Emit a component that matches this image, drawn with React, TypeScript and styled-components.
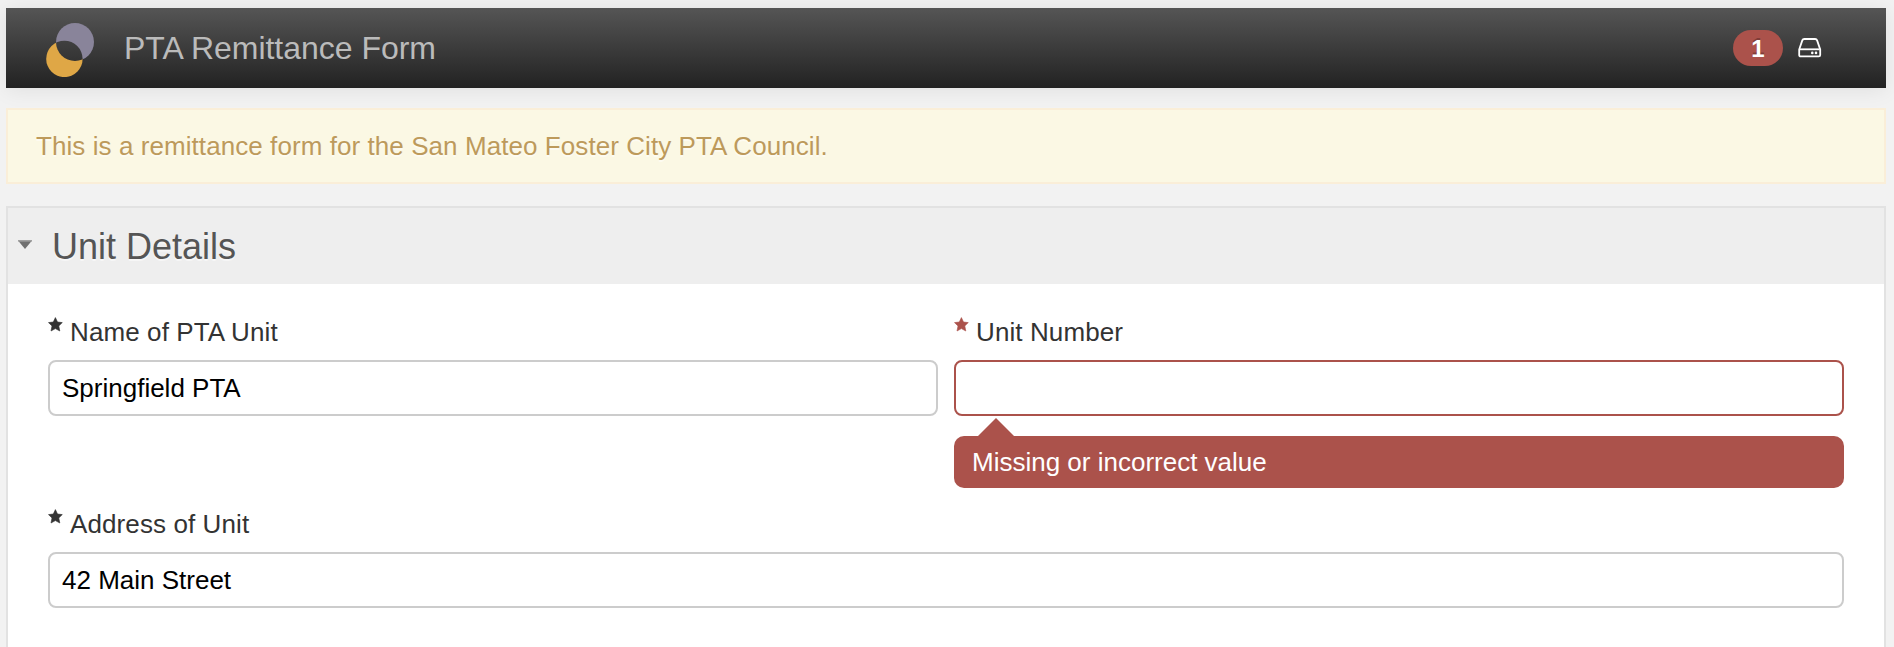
import React from "react";
import styled, { createGlobalStyle } from "styled-components";

const RED = "#ab524b";

const GlobalStyle = createGlobalStyle`
  *, *::before, *::after { box-sizing: border-box; }
  html, body { height: 100%; }
  body {
    margin: 0;
    overflow: hidden;
    background: #f2f2f2;
    color: #333;
    font: 26px/40px "Liberation Sans", Arial, sans-serif;
  }
  #root { height: 100%; }
`;

const Page = styled.div`
  display: flex;
  flex-direction: column;
  height: 100vh;
  padding: 8px 8px 0 6px;
  overflow: hidden;
`;

const Header = styled.header`
  display: flex;
  flex: none;
  align-items: center;
  height: 80px;
  padding: 0 64px 0 40px;
  background: linear-gradient(to bottom, #555, #222);
  box-shadow: 0 2px 20px rgba(0, 0, 0, 0.08);
`;

const LogoSvg = styled.svg`
  display: block;
  flex: none;
  width: 48px;
  height: 54px;
  margin-top: 4px;
`;

const Title = styled.h1`
  flex: 1;
  margin: 0 0 0 30px;
  color: #bbb;
  font-size: 32px;
  font-weight: 400;
  line-height: 40px;
  letter-spacing: -0.02px;
`;

const Badge = styled.span`
  width: 50px;
  height: 36px;
  border-radius: 18px;
  background: ${RED};
  color: #fff;
  font-size: 24px;
  font-weight: 700;
  line-height: 37px;
  text-align: center;
  text-shadow: 0 -2px 0 rgba(0, 0, 0, 0.25);
`;

const DriveSvg = styled.svg`
  display: block;
  width: 24px;
  height: 20px;
  margin-left: 15px;
`;

const Notice = styled.div`
  flex: none;
  height: 76px;
  margin-top: 20px;
  padding: 16px 28px;
  border: 2px solid #faeed8;
  background: #fbf8e4;
  color: #bd9a5b;
  letter-spacing: 0.07px;
  text-shadow: 0 2px 0 rgba(255, 255, 255, 0.5);
`;

const Panel = styled.section`
  flex: 1 0 auto;
  margin-top: 22px;
  border: 2px solid #e2e2e2;
  border-bottom: 0;
  background: #fff;
`;

const PanelHeader = styled.div`
  display: flex;
  align-items: center;
  height: 76px;
  padding-left: 10px;
  background: #eee;
`;

const CaretSvg = styled.svg`
  display: block;
  width: 14px;
  height: 9px;
  margin-top: -3px;
`;

const PanelTitle = styled.h2`
  margin: 2px 0 0 20px;
  color: #555;
  font-size: 36px;
  font-weight: 400;
  line-height: 40px;
  text-shadow: 0 2px 0 rgba(255, 255, 255, 0.5);
`;

const Fields = styled.div`
  display: grid;
  grid-template-columns: 1fr 1fr;
  gap: 16px;
  padding: 28px 40px 40px;
`;

const Field = styled.div<{ $wide?: boolean }>`
  grid-column: ${(p) => (p.$wide ? "1 / -1" : "auto")};
`;

const Label = styled.label`
  display: flex;
  align-items: flex-start;
  height: 48px;
  line-height: 40px;
  letter-spacing: 0.1px;
`;

const StarSvg = styled.svg`
  display: block;
  width: 15px;
  height: 15px;
  margin: 5px 7px 0 0;
`;

const Input = styled.input<{ $invalid?: boolean }>`
  display: block;
  width: 100%;
  height: 56px;
  padding: 0 12px;
  border: 2px solid ${(p) => (p.$invalid ? RED : "#ccc")};
  border-radius: 8px;
  outline: 0;
  background: #fff;
  color: #000;
  font: inherit;
`;

const ErrorBubble = styled.div`
  position: relative;
  height: 52px;
  margin-top: 20px;
  padding: 0 18px;
  border-radius: 10px;
  background: ${RED};
  color: #fff;
  line-height: 52px;

  &::before {
    content: "";
    position: absolute;
    top: -18px;
    left: 24px;
    border: solid transparent;
    border-width: 0 18px 18px;
    border-bottom-color: ${RED};
  }
`;

const Logo = () => (
  <LogoSvg viewBox="0 0 48 54" aria-hidden="true">
    <defs>
      <mask id="outside-lower">
        <rect width="48" height="54" fill="#fff" />
        <circle cx="18.4" cy="35.9" r="18.2" fill="#000" />
      </mask>
      <mask id="outside-upper">
        <rect width="48" height="54" fill="#fff" />
        <circle cx="29" cy="19" r="19" fill="#000" />
      </mask>
    </defs>
    <circle cx="29" cy="19" r="19" fill="#89849a" mask="url(#outside-lower)" />
    <circle cx="18.4" cy="35.9" r="18.2" fill="#dfa746" mask="url(#outside-upper)" />
  </LogoSvg>
);

const DriveIcon = () => (
  <DriveSvg viewBox="0 0 24 20" fill="none" stroke="#fff" strokeWidth="1.8">
    <path d="M1.2 11.5 4.3 2.4Q4.8 1 6.3 1H17.1Q18.6 1 19.1 2.4L22.2 11.5V16.9Q22.2 18.4 20.7 18.4H2.7Q1.2 18.4 1.2 16.9Z" />
    <path d="M1.8 11.3H21.6" />
    <circle cx="14.3" cy="14.9" r="1.3" fill="#fff" stroke="none" />
    <circle cx="18" cy="14.9" r="1.3" fill="#fff" stroke="none" />
  </DriveSvg>
);

const Star = ({ color = "#333" }: { color?: string }) => (
  <StarSvg viewBox="0 0 15 15" aria-hidden="true">
    <path
      fill={color}
      stroke={color}
      strokeWidth="0.6"
      strokeLinejoin="round"
      d="M7.4.6 9.5 5 14.3 5.6 10.8 8.9 11.8 14 7.4 11.6 3 14 4 8.9.5 5.6 5.3 5Z"
    />
  </StarSvg>
);

interface TextFieldProps {
  label: string;
  value: string;
  wide?: boolean;
  error?: string;
}

const TextField = ({ label, value, wide, error }: TextFieldProps) => (
  <Field $wide={wide}>
    <Label>
      <Star color={error ? RED : undefined} />
      {label}
    </Label>
    <Input aria-label={label} defaultValue={value} $invalid={!!error} />
    {error && <ErrorBubble>{error}</ErrorBubble>}
  </Field>
);

export default function App() {
  return (
    <>
      <GlobalStyle />
      <Page>
        <Header>
          <Logo />
          <Title>PTA Remittance Form</Title>
          <Badge>1</Badge>
          <DriveIcon />
        </Header>
        <Notice>This is a remittance form for the San Mateo Foster City PTA Council.</Notice>
        <Panel>
          <PanelHeader>
            <CaretSvg viewBox="0 0 14 9" aria-hidden="true">
              <path d="M0 .5H14L7 9Z" fill="#707070" />
              <path d="M0 0H14V1.6H0Z" fill="#a0a0a0" />
            </CaretSvg>
            <PanelTitle>Unit Details</PanelTitle>
          </PanelHeader>
          <Fields>
            <TextField label="Name of PTA Unit" value="Springfield PTA" />
            <TextField label="Unit Number" value="" error="Missing or incorrect value" />
            <TextField label="Address of Unit" value="42 Main Street" wide />
          </Fields>
        </Panel>
      </Page>
    </>
  );
}
